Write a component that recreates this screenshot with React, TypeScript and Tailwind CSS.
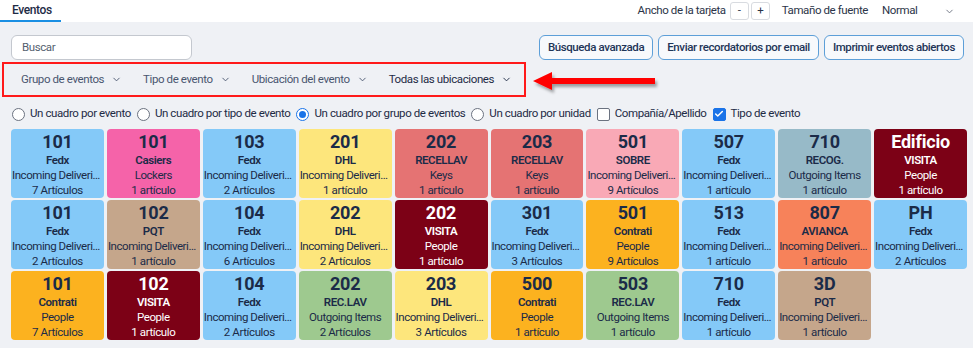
import React from "react";
import { ChevronDown, Check } from "lucide-react";

type Card = { n: string; a: string; b: string; c: string; bg: string; light?: boolean };

const BLUE = "bg-[#84c9f8]";
const PINK = "bg-[#f563a9]";
const YEL = "bg-[#fde67c]";
const RED = "bg-[#e57373]";
const LPINK = "bg-[#f9a9b6]";
const GB = "bg-[#97bac8]";
const DR = "bg-[#7c0116]";
const TAN = "bg-[#c5a68b]";
const OR = "bg-[#fcb21f]";
const CO = "bg-[#f7825a]";
const GR = "bg-[#9ec98f]";

const INC = "Incoming Deliveries";
const cards: Card[] = [
  { n: "101", a: "Fedx", b: INC, c: "7 Artículos", bg: BLUE },
  { n: "101", a: "Casiers", b: "Lockers", c: "1 artículo", bg: PINK },
  { n: "103", a: "Fedx", b: INC, c: "2 Artículos", bg: BLUE },
  { n: "201", a: "DHL", b: INC, c: "1 artículo", bg: YEL },
  { n: "202", a: "RECELLAV", b: "Keys", c: "1 artículo", bg: RED },
  { n: "203", a: "RECELLAV", b: "Keys", c: "1 artículo", bg: RED },
  { n: "501", a: "SOBRE", b: INC, c: "9 Artículos", bg: LPINK },
  { n: "507", a: "Fedx", b: INC, c: "1 artículo", bg: BLUE },
  { n: "710", a: "RECOG.", b: "Outgoing Items", c: "1 artículo", bg: GB },
  { n: "Edificio", a: "VISITA", b: "People", c: "1 artículo", bg: DR, light: true },
  { n: "101", a: "Fedx", b: INC, c: "2 Artículos", bg: BLUE },
  { n: "102", a: "PQT", b: INC, c: "1 artículo", bg: TAN },
  { n: "104", a: "Fedx", b: INC, c: "6 Artículos", bg: BLUE },
  { n: "202", a: "DHL", b: INC, c: "2 Artículos", bg: YEL },
  { n: "202", a: "VISITA", b: "People", c: "1 artículo", bg: DR, light: true },
  { n: "301", a: "Fedx", b: INC, c: "3 Artículos", bg: BLUE },
  { n: "501", a: "Contrati", b: "People", c: "9 Artículos", bg: OR },
  { n: "513", a: "Fedx", b: INC, c: "1 artículo", bg: BLUE },
  { n: "807", a: "AVIANCA", b: INC, c: "1 artículo", bg: CO },
  { n: "PH", a: "Fedx", b: INC, c: "2 Artículos", bg: BLUE },
  { n: "101", a: "Contrati", b: "People", c: "7 Artículos", bg: OR },
  { n: "102", a: "VISITA", b: "People", c: "1 artículo", bg: DR, light: true },
  { n: "104", a: "Fedx", b: INC, c: "2 Artículos", bg: BLUE },
  { n: "202", a: "REC.LAV", b: "Outgoing Items", c: "2 Artículos", bg: GR },
  { n: "203", a: "DHL", b: INC, c: "3 Artículos", bg: YEL },
  { n: "500", a: "Contrati", b: "People", c: "1 artículo", bg: OR },
  { n: "503", a: "REC.LAV", b: "Outgoing Items", c: "1 artículo", bg: GR },
  { n: "710", a: "Fedx", b: INC, c: "1 artículo", bg: BLUE },
  { n: "3D", a: "PQT", b: INC, c: "1 artículo", bg: TAN },
];

function Radio({ on, label }: { on?: boolean; label: string }) {
  return (
    <div className="flex items-center gap-[5px] whitespace-nowrap">
      <span
        className={
          "w-[13px] h-[13px] rounded-full border flex items-center justify-center bg-white " +
          (on ? "border-[#1a73e8]" : "border-[#6b7280]")
        }
      >
        {on && <span className="w-[7px] h-[7px] rounded-full bg-[#1a73e8]" />}
      </span>
      <span>{label}</span>
    </div>
  );
}

function Box({ on, label }: { on?: boolean; label: string }) {
  return (
    <div className="flex items-center gap-[5px] whitespace-nowrap">
      <span
        className={
          "w-[13px] h-[13px] rounded-[2px] border flex items-center justify-center " +
          (on ? "bg-[#1a73e8] border-[#1a73e8]" : "bg-white border-[#6b7280]")
        }
      >
        {on && <Check size={10} strokeWidth={3.5} color="white" />}
      </span>
      <span>{label}</span>
    </div>
  );
}

function Drop({ label, dark }: { label: string; dark?: boolean }) {
  return (
    <div
      className={
        "flex items-center gap-[7px] whitespace-nowrap " + (dark ? "text-[#1e2b45]" : "text-[#4a5670]")
      }
    >
      <span>{label}</span>
      <ChevronDown size={11} strokeWidth={2} />
    </div>
  );
}

export default function App() {
  return (
    <div
      className="w-[975px] h-[355px] bg-white text-[11.5px] tracking-[-0.4px] text-[#1e2b45] relative overflow-hidden"
      style={{ fontFamily: "Roboto, 'Noto Sans', sans-serif" }}
    >
      {/* top bar */}
      <div className="h-[22px] flex items-center justify-between bg-white">
        <div className="h-full flex flex-col w-[61px]">
          <div className="flex-1 flex items-center pl-[12px] font-medium text-[12px] text-[#1e2b45]">Eventos</div>
          <div className="h-[2px] bg-[#1a8fe3]" />
        </div>
        <div className="flex items-center pr-[20px] h-full text-[#2b3448] whitespace-nowrap">
          <span className="mr-[4px]">Ancho de la tarjeta</span>
          <span className="w-[19px] h-[18px] border border-[#d8dbe0] rounded-[3px] flex items-center justify-center mr-[2px]">-</span>
          <span className="w-[19px] h-[18px] border border-[#d8dbe0] rounded-[3px] flex items-center justify-center mr-[12px]">+</span>
          <span className="mr-[14px]">Tamaño de fuente</span>
          <span className="w-[62px]">Normal</span>
          <ChevronDown size={11} color="#6b7280" />
        </div>
      </div>

      {/* gray panel */}
      <div className="w-[973px] h-[326px] bg-[#eff1f5] pt-[13px]">
        <div className="flex items-center justify-between pl-[11px] pr-[9px]">
          <div className="w-[181px] h-[25px] bg-white border border-[#c4c8cf] rounded-[6px] flex items-center pl-[10px] text-[#555f70]">
            Buscar
          </div>
          <div className="flex gap-[5px]">
            {["Búsqueda avanzada", "Enviar recordatorios por email", "Imprimir eventos abiertos"].map((t) => (
              <div
                key={t}
                className="h-[25px] px-[8px] border border-[#5d9fd8] rounded-[6px] bg-[#f7f9fc] flex items-center font-medium text-[#1e3558] whitespace-nowrap"
              >
                {t}
              </div>
            ))}
          </div>
        </div>

        <div className="ml-[2px] mt-[2px] w-[524px] h-[35px] border-2 border-[#ff1a1a] flex items-center pl-[17px] gap-[21px] text-[11.5px]">
          <Drop label="Grupo de eventos" />
          <Drop label="Tipo de evento" />
          <Drop label="Ubicación del evento" />
          <Drop label="Todas las ubicaciones" dark />
        </div>

        <div className="flex items-center gap-[6px] pl-[12px] mt-[8px] h-[18px] text-[#1e2b45]">
          <Radio label="Un cuadro por evento" />
          <Radio label="Un cuadro por tipo de evento" />
          <Radio on label="Un cuadro por grupo de eventos" />
          <Radio label="Un cuadro por unidad" />
          <Box label="Compañía/Apellido" />
          <Box on label="Tipo de evento" />
        </div>

        <div className="grid grid-cols-10 gap-x-[3px] gap-y-[2px] ml-[11px] mt-[6px] w-[956px]">
          {cards.map((c, i) => (
            <div
              key={i}
              className={
                "h-[69px] rounded-[4px] flex flex-col items-center pt-[2px] px-[1px] overflow-hidden " +
                c.bg +
                " " +
                (c.light ? "text-white" : "text-[#1b2b48]")
              }
            >
              <div className="text-[18px] font-bold leading-[22px] tracking-[-0.2px]">{c.n}</div>
              <div className="text-[11.5px] font-semibold leading-[15px]">{c.a}</div>
              <div className="text-[11.5px] leading-[15px] w-full truncate text-center tracking-[-0.45px]">{c.b}</div>
              <div className="text-[11.5px] leading-[15px]">{c.c}</div>
            </div>
          ))}
        </div>
      </div>

      {/* annotation arrow */}
      <svg className="absolute left-[528px] top-[66px]" width="140" height="32" viewBox="0 0 140 32">
        <defs>
          <filter id="sh" x="-10%" y="-30%" width="130%" height="180%">
            <feDropShadow dx="2" dy="3" stdDeviation="1.5" floodColor="#000" floodOpacity="0.35" />
          </filter>
        </defs>
        <polygon points="5,15 24,6 24,12 127,12 127,18 24,18 24,24" fill="#ff0000" filter="url(#sh)" />
      </svg>
    </div>
  );
}
